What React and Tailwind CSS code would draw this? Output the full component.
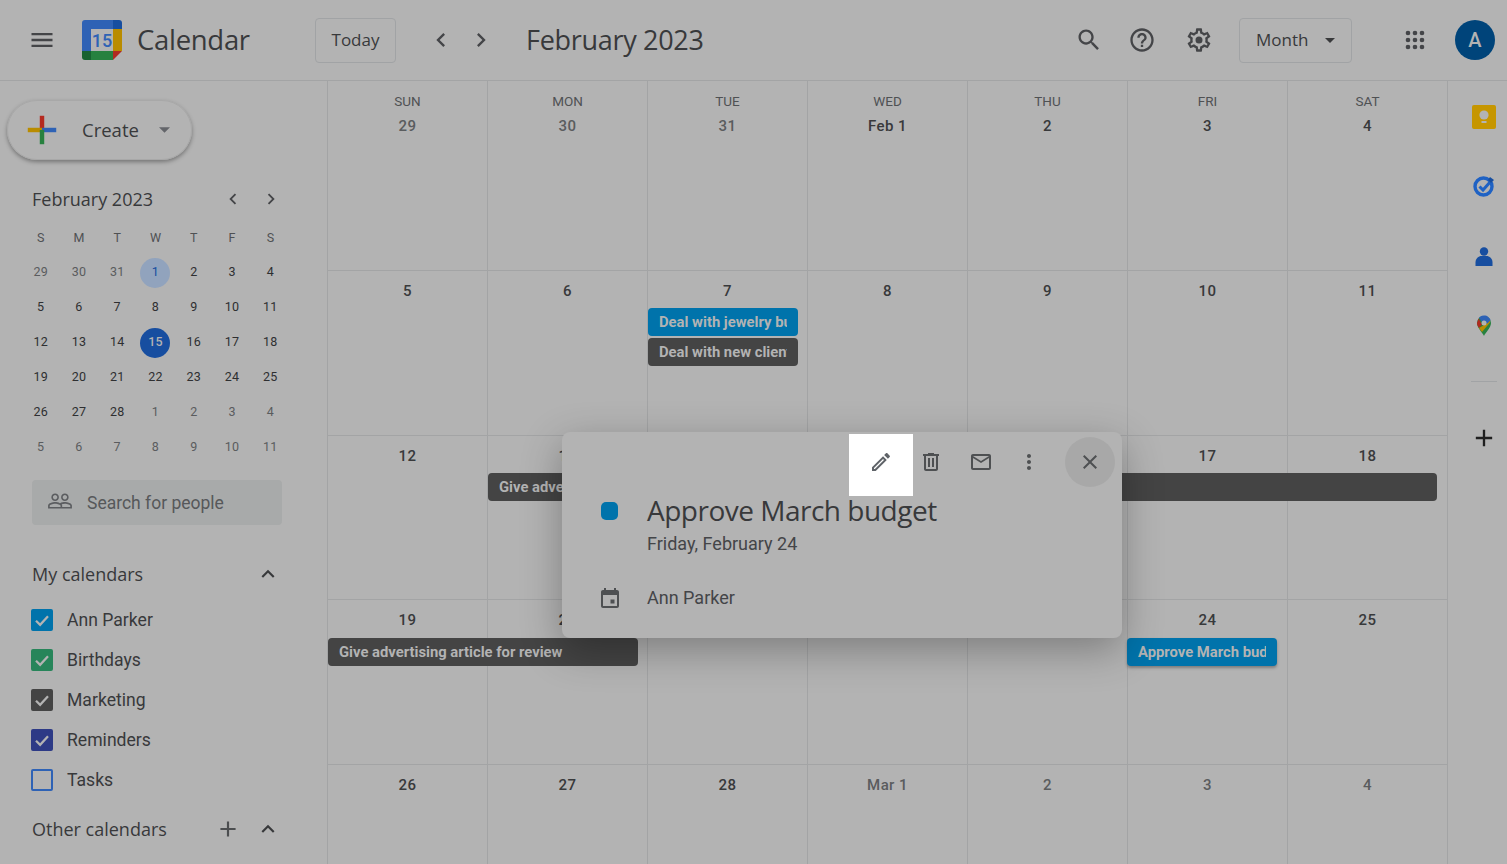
const P = {
  menu: 'M3 18h18v-2H3v2zm0-5h18v-2H3v2zm0-7v2h18V6H3z',
  left: 'M15.41 7.41L14 6l-6 6 6 6 1.41-1.41L10.83 12z',
  right: 'M8.59 16.59L10 18l6-6-6-6-1.41 1.41L13.17 12z',
  search: 'M15.5 14h-.79l-.28-.27C15.41 12.59 16 11.11 16 9.5 16 5.91 13.09 3 9.5 3S3 5.91 3 9.5 5.91 16 9.5 16c1.61 0 3.09-.59 4.23-1.57l.27.28v.79l5 4.99L20.49 19l-4.99-5zm-6 0C7.01 14 5 11.99 5 9.5S7.01 5 9.5 5 14 7.01 14 9.5 11.99 14 9.5 14z',
  help: 'M11 18h2v-2h-2v2zm1-16C6.48 2 2 6.48 2 12s4.48 10 10 10 10-4.48 10-10S17.52 2 12 2zm0 18c-4.41 0-8-3.59-8-8s3.59-8 8-8 8 3.59 8 8-3.59 8-8 8zm0-14c-2.21 0-4 1.79-4 4h2c0-1.1.9-2 2-2s2 .9 2 2c0 2-3 1.75-3 5h2c0-2.25 3-2.5 3-5 0-2.21-1.79-4-4-4z',
  gear: 'M19.43 12.98c.04-.32.07-.64.07-.98 0-.34-.03-.66-.07-.98l2.11-1.65c.19-.15.24-.42.12-.64l-2-3.46c-.09-.16-.26-.25-.44-.25-.06 0-.12.01-.17.03l-2.49 1c-.52-.4-1.08-.73-1.69-.98l-.38-2.65C14.46 2.18 14.25 2 14 2h-4c-.25 0-.46.18-.49.42l-.38 2.65c-.61.25-1.17.59-1.69.98l-2.49-1c-.06-.02-.12-.03-.18-.03-.17 0-.34.09-.43.25l-2 3.46c-.13.22-.07.49.12.64l2.11 1.65c-.04.32-.07.65-.07.98 0 .33.03.66.07.98l-2.11 1.65c-.19.15-.24.42-.12.64l2 3.46c.09.16.26.25.44.25.06 0 .12-.01.17-.03l2.49-1c.52.4 1.08.73 1.69.98l.38 2.65c.03.24.24.42.49.42h4c.25 0 .46-.18.49-.42l.38-2.65c.61-.25 1.17-.59 1.69-.98l2.49 1c.06.02.12.03.18.03.17 0 .34-.09.43-.25l2-3.46c.12-.22.07-.49-.12-.64l-2.11-1.65zm-1.98-1.71c.04.31.05.52.05.73 0 .21-.02.43-.05.73l-.14 1.13.89.7 1.08.84-.7 1.21-1.27-.51-1.04-.42-.9.68c-.43.32-.84.56-1.25.73l-1.06.43-.16 1.13-.2 1.35h-1.4l-.19-1.35-.16-1.13-1.06-.43c-.43-.18-.83-.41-1.23-.71l-.91-.7-1.06.43-1.27.51-.7-1.21 1.08-.84.89-.7-.14-1.13c-.03-.31-.05-.54-.05-.74s.02-.43.05-.73l.14-1.13-.89-.7-1.08-.84.7-1.21 1.27.51 1.04.42.9-.68c.43-.32.84-.56 1.25-.73l1.06-.43.16-1.13.2-1.35h1.39l.19 1.35.16 1.13 1.06.43c.43.18.83.41 1.23.71l.91.7 1.06-.43 1.27-.51.7 1.21-1.07.85-.89.7.14 1.13zM12 9a3 3 0 100 6 3 3 0 000-6z',
  pencil: 'M3 17.25V21h3.75L17.81 9.94l-3.75-3.75L3 17.25zM5.92 19H5v-.92l9.06-9.06.92.92L5.92 19zM20.71 5.63l-2.34-2.34c-.2-.2-.45-.29-.71-.29s-.51.1-.7.29l-1.83 1.83 3.75 3.75 1.83-1.83c.39-.39.39-1.02 0-1.41z',
  trash: 'M15 4V3H9v1H4v2h1v13c0 1.1.9 2 2 2h10c1.1 0 2-.9 2-2V6h1V4h-5zm2 15H7V6h10v13zM9 8h2v9H9zm4 0h2v9h-2z',
  mail: 'M22 6c0-1.1-.9-2-2-2H4c-1.1 0-2 .9-2 2v12c0 1.1.9 2 2 2h16c1.1 0 2-.9 2-2V6zm-2 0l-8 5-8-5h16zm0 12H4V8l8 5 8-5v10z',
  more: 'M12 8c1.1 0 2-.9 2-2s-.9-2-2-2-2 .9-2 2 .9 2 2 2zm0 2c-1.1 0-2 .9-2 2s.9 2 2 2 2-.9 2-2-.9-2-2-2zm0 6c-1.1 0-2 .9-2 2s.9 2 2 2 2-.9 2-2-.9-2-2-2z',
  close: 'M19 6.41L17.59 5 12 10.59 6.41 5 5 6.41 10.59 12 5 17.59 6.41 19 12 13.41 17.59 19 19 17.59 13.41 12z',
  event: 'M19 4h-1V2h-2v2H8V2H6v2H5c-1.1 0-2 .9-2 2v14c0 1.1.9 2 2 2h14c1.1 0 2-.9 2-2V6c0-1.1-.9-2-2-2zm0 16H5V9h14v11zm-2.5-6.5h-4v4h4z',
  people: 'M16.5 13c-1.2 0-3.07.34-4.5 1-1.43-.67-3.3-1-4.5-1C5.33 13 1 14.08 1 16.25V19h22v-2.75c0-2.17-4.33-3.25-6.5-3.25zm-4 4.5h-10v-1.25c0-.54 2.56-1.75 5-1.75s5 1.21 5 1.75v1.25zm9 0H14v-1.25c0-.46-.2-.86-.52-1.22.88-.3 1.96-.53 3.02-.53 2.44 0 5 1.21 5 1.75v1.25zM7.5 12c1.93 0 3.5-1.57 3.5-3.5S9.43 5 7.5 5 4 6.57 4 8.5 5.57 12 7.5 12zm0-5.5c1.1 0 2 .9 2 2s-.9 2-2 2-2-.9-2-2 .9-2 2-2zm9 5.5c1.93 0 3.5-1.57 3.5-3.5S18.43 5 16.5 5 13 6.57 13 8.5s1.57 3.5 3.5 3.5zm0-5.5c1.1 0 2 .9 2 2s-.9 2-2 2-2-.9-2-2 .9-2 2-2z',
  up: 'M7.41 15.41L12 10.83l4.59 4.58L18 14l-6-6-6 6z',
  add: 'M19 13h-6v6h-2v-6H5v-2h6V5h2v6h6v2z',
  apps: 'M6 8a2 2 0 100-4 2 2 0 000 4zm6 0a2 2 0 100-4 2 2 0 000 4zm6 0a2 2 0 100-4 2 2 0 000 4zM6 14a2 2 0 100-4 2 2 0 000 4zm6 0a2 2 0 100-4 2 2 0 000 4zm6 0a2 2 0 100-4 2 2 0 000 4zM6 20a2 2 0 100-4 2 2 0 000 4zm6 0a2 2 0 100-4 2 2 0 000 4zm6 0a2 2 0 100-4 2 2 0 000 4z',
};

const Icon = ({ d, className }) => (
  <svg viewBox="0 0 24 24" fill="currentColor" className={className}>
    <path d={d} />
  </svg>
);

const Logo = () => (
  <svg viewBox="0 0 40 40" className="w-10 h-10 shrink-0">
    <path d="M3 0h28v9H9v22H0V3a3 3 0 013-3z" fill="#2e62b5" />
    <path d="M31 0h6a3 3 0 013 3v6h-9z" fill="#174ea0" />
    <rect x="31" y="9" width="9" height="22" fill="#b98c00" />
    <rect x="9" y="31" width="22" height="9" fill="#27813f" />
    <path d="M0 31h9v9H3a3 3 0 01-3-3z" fill="#176330" />
    <path d="M31 31h9l-9 9z" fill="#b02a20" />
    <rect x="9" y="9" width="22" height="22" fill="#b3b3b3" />
    <text x="20" y="26.500" textAnchor="middle" fontSize="18" fontWeight="500" fontFamily="Roboto, sans-serif" fill="#2e62b5">15</text>
  </svg>
);

const Plus = () => (
  <svg viewBox="0 0 36 36" className="w-8 h-8 shrink-0">
    <rect x="15.5" y="2" width="5" height="16" fill="#b52a20" />
    <rect x="2" y="15.5" width="16" height="5" fill="#b98c00" />
    <rect x="18" y="15.5" width="16" height="5" fill="#2e62b5" />
    <rect x="15.5" y="18" width="5" height="16" fill="#27813f" />
  </svg>
);

const dows = ['S', 'M', 'T', 'W', 'T', 'F', 'S'];
const mini = [
  [29, 30, 31, 1, 2, 3, 4],
  [5, 6, 7, 8, 9, 10, 11],
  [12, 13, 14, 15, 16, 17, 18],
  [19, 20, 21, 22, 23, 24, 25],
  [26, 27, 28, 1, 2, 3, 4],
  [5, 6, 7, 8, 9, 10, 11],
];

const MiniDay = ({ day, row, col }) => {
  const muted = (row === 0 && col < 3) || (row === 4 && col > 2) || row === 5;
  const isOne = row === 0 && col === 3;
  const isToday = row === 2 && col === 3;
  let tone = muted ? 'text-[#5a5c5e]' : 'text-[#2e2f31]';
  if (isOne) tone = 'bg-[#91a3bd] text-[#174ea0] rounded-full';
  if (isToday) tone = 'bg-[#174ea0] text-[#b3b3b3] rounded-full font-medium';
  return (
    <div className="h-[35px] flex items-center justify-center">
      <span className={`w-[30px] h-[30px] flex items-center justify-center text-[12.5px] tracking-[0.2px] ${tone}`}>{day}</span>
    </div>
  );
};

const calendars = [
  { name: 'Ann Parker', box: 'bg-[#0073ab] border-[#0073ab]', on: true },
  { name: 'Birthdays', box: 'bg-[#27855a] border-[#27855a]', on: true },
  { name: 'Marketing', box: 'bg-[#444444] border-[#444444]', on: true },
  { name: 'Reminders', box: 'bg-[#2d3a86] border-[#2d3a86]', on: true },
  { name: 'Tasks', box: 'border-[#2e62b5]', on: false },
];

const Sidebar = () => (
  <aside className="w-[328px] shrink-0 border-r border-[#a3a4a5] overflow-hidden">
    <div className="pl-[7px] pt-[19px]">
      <div className="w-[185px] h-[60px] rounded-full border border-[#a8a8a8] shadow-[0_2px_4px_rgba(0,0,0,0.35)] flex items-center pl-[18px]">
        <Plus />
        <span className="ml-[24px] text-[18.5px] font-['Open_Sans',sans-serif] text-[#38393b]">Create</span>
        <svg viewBox="0 0 10 5" className="w-[11px] h-[6px] ml-[20px] text-[#63656a]" fill="currentColor"><path d="M0 0l5 5 5-5z" /></svg>
      </div>
    </div>
    <div className="pl-[32px] pr-[45px] mt-[27px] flex items-center h-[24px]">
      <span className="text-[18px] font-['Open_Sans',sans-serif] text-[#38393b]">February 2023</span>
      <Icon d={P.left} className="w-[22px] h-[22px] ml-auto text-[#444548]" />
      <Icon d={P.right} className="w-[22px] h-[22px] ml-[16px] text-[#444548]" />
    </div>
    <div className="ml-[21.5px] mt-[11px] w-[268px] grid grid-cols-7">
      {dows.map((d, i) => (
        <div key={i} className="h-[33px] flex items-center justify-center text-[12.5px] text-[#4f5153]">{d}</div>
      ))}
      {mini.map((week, r) => week.map((day, c) => <MiniDay key={`${r}-${c}`} day={day} row={r} col={c} />))}
    </div>
    <div className="ml-[32px] w-[250px] mt-[15px] h-[45px] rounded bg-[#a8aaaa] flex items-center pl-[15px]">
      <Icon d={P.people} className="w-[26px] h-[26px] text-[#5b5d60] -mt-[4px]" />
      <span className="ml-[14px] text-[17.5px] text-[#56585a] mt-[1px]">Search for people</span>
    </div>
    <div className="pl-[32px] pr-[46px] mt-[35px] h-[28px] flex items-center justify-between">
      <span className="text-[18px] font-['Open_Sans',sans-serif] text-[#38393b]">My calendars</span>
      <Icon d={P.up} className="w-[26px] h-[26px] text-[#38393b]" />
    </div>
    <div className="mt-[12px] pl-[31px]">
      {calendars.map((c) => (
        <div key={c.name} className="h-[40px] flex items-center">
          <span className={`w-[22px] h-[22px] rounded-[2px] border-2 flex items-center justify-center ${c.box}`}>
            {c.on && (
              <svg viewBox="0 0 24 24" className="w-[20px] h-[20px] text-[#b3b3b3]" fill="none" stroke="currentColor" strokeWidth="3"><path d="M4 13l5.500 5.500L20 7" /></svg>
            )}
          </span>
          <span className="ml-[14px] text-[17.6px] text-[#38393b]">{c.name}</span>
        </div>
      ))}
    </div>
    <div className="pl-[32px] pr-[46px] mt-[15px] h-[28px] flex items-center">
      <span className="text-[18px] font-['Open_Sans',sans-serif] text-[#38393b]">Other calendars</span>
      <Icon d={P.add} className="w-[26px] h-[26px] ml-auto text-[#4c4e50]" />
      <Icon d={P.up} className="w-[26px] h-[26px] ml-[14px] text-[#38393b]" />
    </div>
  </aside>
);

const Header = () => (
  <header className="h-[81px] shrink-0 border-b border-[#a3a4a5] flex items-center text-[#38393b]">
    <Icon d={P.menu} className="w-7 h-7 ml-[28px] text-[#444548]" />
    <div className="ml-[26px]"><Logo /></div>
    <span className="ml-[15px] w-[178px] text-[27.5px] font-['Open_Sans',sans-serif] tracking-[-0.3px]">Calendar</span>
    <div className="w-[81px] h-[45px] rounded border border-[#a1a3a5] flex items-center justify-center text-[17px] font-['Open_Sans',sans-serif]">Today</div>
    <Icon d={P.left} className="w-7 h-7 ml-[31px] text-[#444548]" />
    <Icon d={P.right} className="w-7 h-7 ml-[12px] text-[#444548]" />
    <span className="ml-[31px] text-[27px] font-['Open_Sans',sans-serif] tracking-[-0.3px]">February 2023</span>
    <Icon d={P.search} className="w-7 h-7 ml-auto text-[#444548]" />
    <Icon d={P.help} className="w-7 h-7 ml-[25px] text-[#444548]" />
    <Icon d={P.gear} className="w-7 h-7 ml-[29px] text-[#444548]" />
    <div className="ml-[26px] w-[113px] h-[45px] rounded border border-[#a1a3a5] flex items-center pl-[16px] text-[17px] font-['Open_Sans',sans-serif]">
      Month
      <svg viewBox="0 0 10 5" className="w-[10px] h-[5px] ml-[17px] text-[#38393b]" fill="currentColor"><path d="M0 0l5 5 5-5z" /></svg>
    </div>
    <Icon d={P.apps} className="w-7 h-7 ml-[49px] text-[#444548]" />
    <div className="ml-[26px] mr-[12px] w-10 h-10 rounded-full bg-[#00447a] flex items-center justify-center text-[#b3b3b3] text-[20px] font-medium">A</div>
  </header>
);

const colStart = [
  'col-start-1', 'col-start-2', 'col-start-3', 'col-start-4', 'col-start-5', 'col-start-6', 'col-start-7',
];

const Week = ({ days, heads, height, rows = 'grid-rows-[37px_30px_30px_1fr]', children }) => (
  <div className={`grid grid-cols-7 shrink-0 border-b border-[#a3a4a5] ${rows} ${height}`}>
    {days.map((d, i) => (
      <div key={i} className={`${colStart[i]} row-start-1 row-span-4 border-r border-[#a3a4a5] flex flex-col items-center`}>
        {heads && <span className="mt-[12px] h-[16px] text-[13.5px] leading-[16px] text-[#4f5153]">{heads[i]}</span>}
        <span className={`text-[15px] tracking-[0.4px] font-medium leading-[20px] ${heads ? 'mt-[7px]' : 'mt-[10px]'} ${d.muted ? 'text-[#5a5c5e]' : 'text-[#38393b]'}`}>{d.label}</span>
      </div>
    ))}
    {children}
  </div>
);

const Chip = ({ className, children }) => (
  <div className={`h-[28px] rounded-[4px] pl-[11px] pr-[11px] text-[14.8px] leading-[28px] font-bold whitespace-nowrap text-[#b3b3b3] z-10 ${className}`}>
    <div className="overflow-hidden">{children}</div>
  </div>
);

const Grid = () => {
  const w = (arr) => arr.map((x) => (typeof x === 'object' ? x : { label: String(x) }));
  const m = (label) => ({ label: String(label), muted: true });
  return (
    <main className="w-[1120px] shrink-0 flex flex-col overflow-hidden">
      <Week
        height="h-[190px]"
        heads={['SUN', 'MON', 'TUE', 'WED', 'THU', 'FRI', 'SAT']}
        days={w([m(29), m(30), m(31), 'Feb 1', 2, 3, 4])}
      />
      <Week height="h-[165px]" days={w([5, 6, 7, 8, 9, 10, 11])}>
        <Chip className="col-start-3 row-start-2 mr-[10px] bg-[#0073ab]">Deal with jewelry business</Chip>
        <Chip className="col-start-3 row-start-3 mr-[10px] bg-[#444444]">Deal with new clients</Chip>
      </Week>
      <Week height="h-[164px]" days={w([12, 13, 14, 15, 16, 17, 18])}>
        <Chip className="col-start-2 col-span-6 row-start-2 mr-[11px] bg-[#444444]">Give advertising article for review</Chip>
      </Week>
      <Week height="h-[165px]" rows="grid-rows-[38px_30px_30px_1fr]" days={w([19, 20, 21, 22, 23, 24, 25])}>
        <Chip className="col-start-1 col-span-2 row-start-2 mr-[10px] bg-[#444444]">Give advertising article for review</Chip>
        <Chip className="col-start-6 row-start-2 mr-[11px] -ml-px bg-[#0073ab] shadow-[0_2px_3px_rgba(0,0,0,0.3)]">Approve March budget</Chip>
      </Week>
      <Week height="h-[165px]" days={w([26, 27, 28, m('Mar 1'), m(2), m(3), m(4)])} />
    </main>
  );
};

const Rail = () => (
  <aside className="flex-1 flex flex-col items-center pt-[24px] pl-[12px]">
    <svg viewBox="0 0 24 24" className="w-6 h-6">
      <rect width="24" height="24" rx="2" fill="#c69600" />
      <circle cx="12" cy="10" r="4.600" fill="#b3b3b3" />
      <rect x="9.500" y="16" width="5" height="2" fill="#b3b3b3" />
    </svg>
    <svg viewBox="0 0 24 24" className="w-6 h-6 mt-[45px]">
      <circle cx="11.500" cy="12.500" r="8.500" fill="none" stroke="#1f62c4" strokeWidth="3.400" />
      <path d="M7.500 12.500l3.500 3.500 8-9" fill="none" stroke="#1f62c4" strokeWidth="3" />
      <path d="M18 3l4 3-3 3-3-3z" fill="#174ea0" />
    </svg>
    <svg viewBox="0 0 24 24" className="w-6 h-6 mt-[47px]">
      <circle cx="12" cy="6.500" r="4.200" fill="#174ea0" />
      <path d="M3.500 21v-3.500c0-4 3-6.500 6-6.500h5c3 0 6 2.500 6 6.500V21z" fill="#174ea0" />
    </svg>
    <svg viewBox="0 0 24 24" className="w-6 h-6 mt-[45px]">
      <path d="M12 22c-1-3-7-8-7-13a7 7 0 0114 0c0 5-6 10-7 13z" fill="#27813f" />
      <path d="M6.500 4.500L5 9c0 2 1 3.500 2 5l3-3.500z" fill="#b02a20" />
      <path d="M7 14l3 4 8-9.500-.5-2.500-3.500 4z" fill="#b98c00" />
      <path d="M7 3.500A7 7 0 0118.500 6l-3 3.500-6-2z" fill="#2e62b5" />
      <circle cx="12" cy="9" r="2.500" fill="#b3b3b3" />
    </svg>
    <div className="w-[26px] border-t border-[#a1a3a5] mt-[43px]" />
    <Icon d={P.add} className="w-7 h-7 mt-[42px] text-[#1f1f1f]" />
  </aside>
);

const Popup = () => (
  <div className="absolute left-[562px] top-[432px] w-[560px] h-[206px] rounded-lg bg-[#b3b3b3] shadow-[0_12px_40px_rgba(0,0,0,0.3)] z-20 text-[#38393b]">
    <div className="flex items-start h-[64px] pt-[2px] pl-[287px]">
      <div className="w-[64px] h-[62px] bg-white flex items-center justify-center">
        <Icon d={P.pencil} className="w-6 h-6 text-[#5f6368] -mt-[6px]" />
      </div>
      <Icon d={P.trash} className="w-6 h-6 ml-[5.5px] mt-[16px] text-[#4e5052]" />
      <Icon d={P.mail} className="w-6 h-6 ml-[26px] mt-[16px] text-[#4e5052]" />
      <Icon d={P.more} className="w-6 h-6 ml-[24.5px] mt-[16px] text-[#4e5052]" />
      <div className="ml-[24px] mt-[3px] w-[50px] h-[50px] rounded-full bg-[#a8a8a8] flex items-center justify-center">
        <Icon d={P.close} className="w-6 h-6 text-[#4e5052]" />
      </div>
    </div>
    <div className="flex pl-[39px]">
      <span className="w-[17px] h-[18px] mt-[6px] rounded-[5px] bg-[#0073ab]" />
      <div className="ml-[29px]">
        <div className="-mt-[2px] text-[28px] leading-[32px] font-['Open_Sans',sans-serif] tracking-[-0.5px]">Approve March budget</div>
        <div className="mt-[6px] text-[18px] leading-[24px] text-[#444548]">Friday, February 24</div>
      </div>
    </div>
    <div className="flex items-center pl-[36px] mt-[28px]">
      <Icon d={P.event} className="w-6 h-6 text-[#4e5052]" />
      <span className="ml-[25px] text-[18px] text-[#444548]">Ann Parker</span>
    </div>
  </div>
);

export default function App() {
  return (
    <div className="relative w-[1507px] h-[864px] overflow-hidden bg-[#b3b3b3] font-['Roboto',sans-serif] flex flex-col">
      <Header />
      <div className="flex flex-1 min-h-0">
        <Sidebar />
        <Grid />
        <Rail />
      </div>
      <Popup />
    </div>
  );
}
